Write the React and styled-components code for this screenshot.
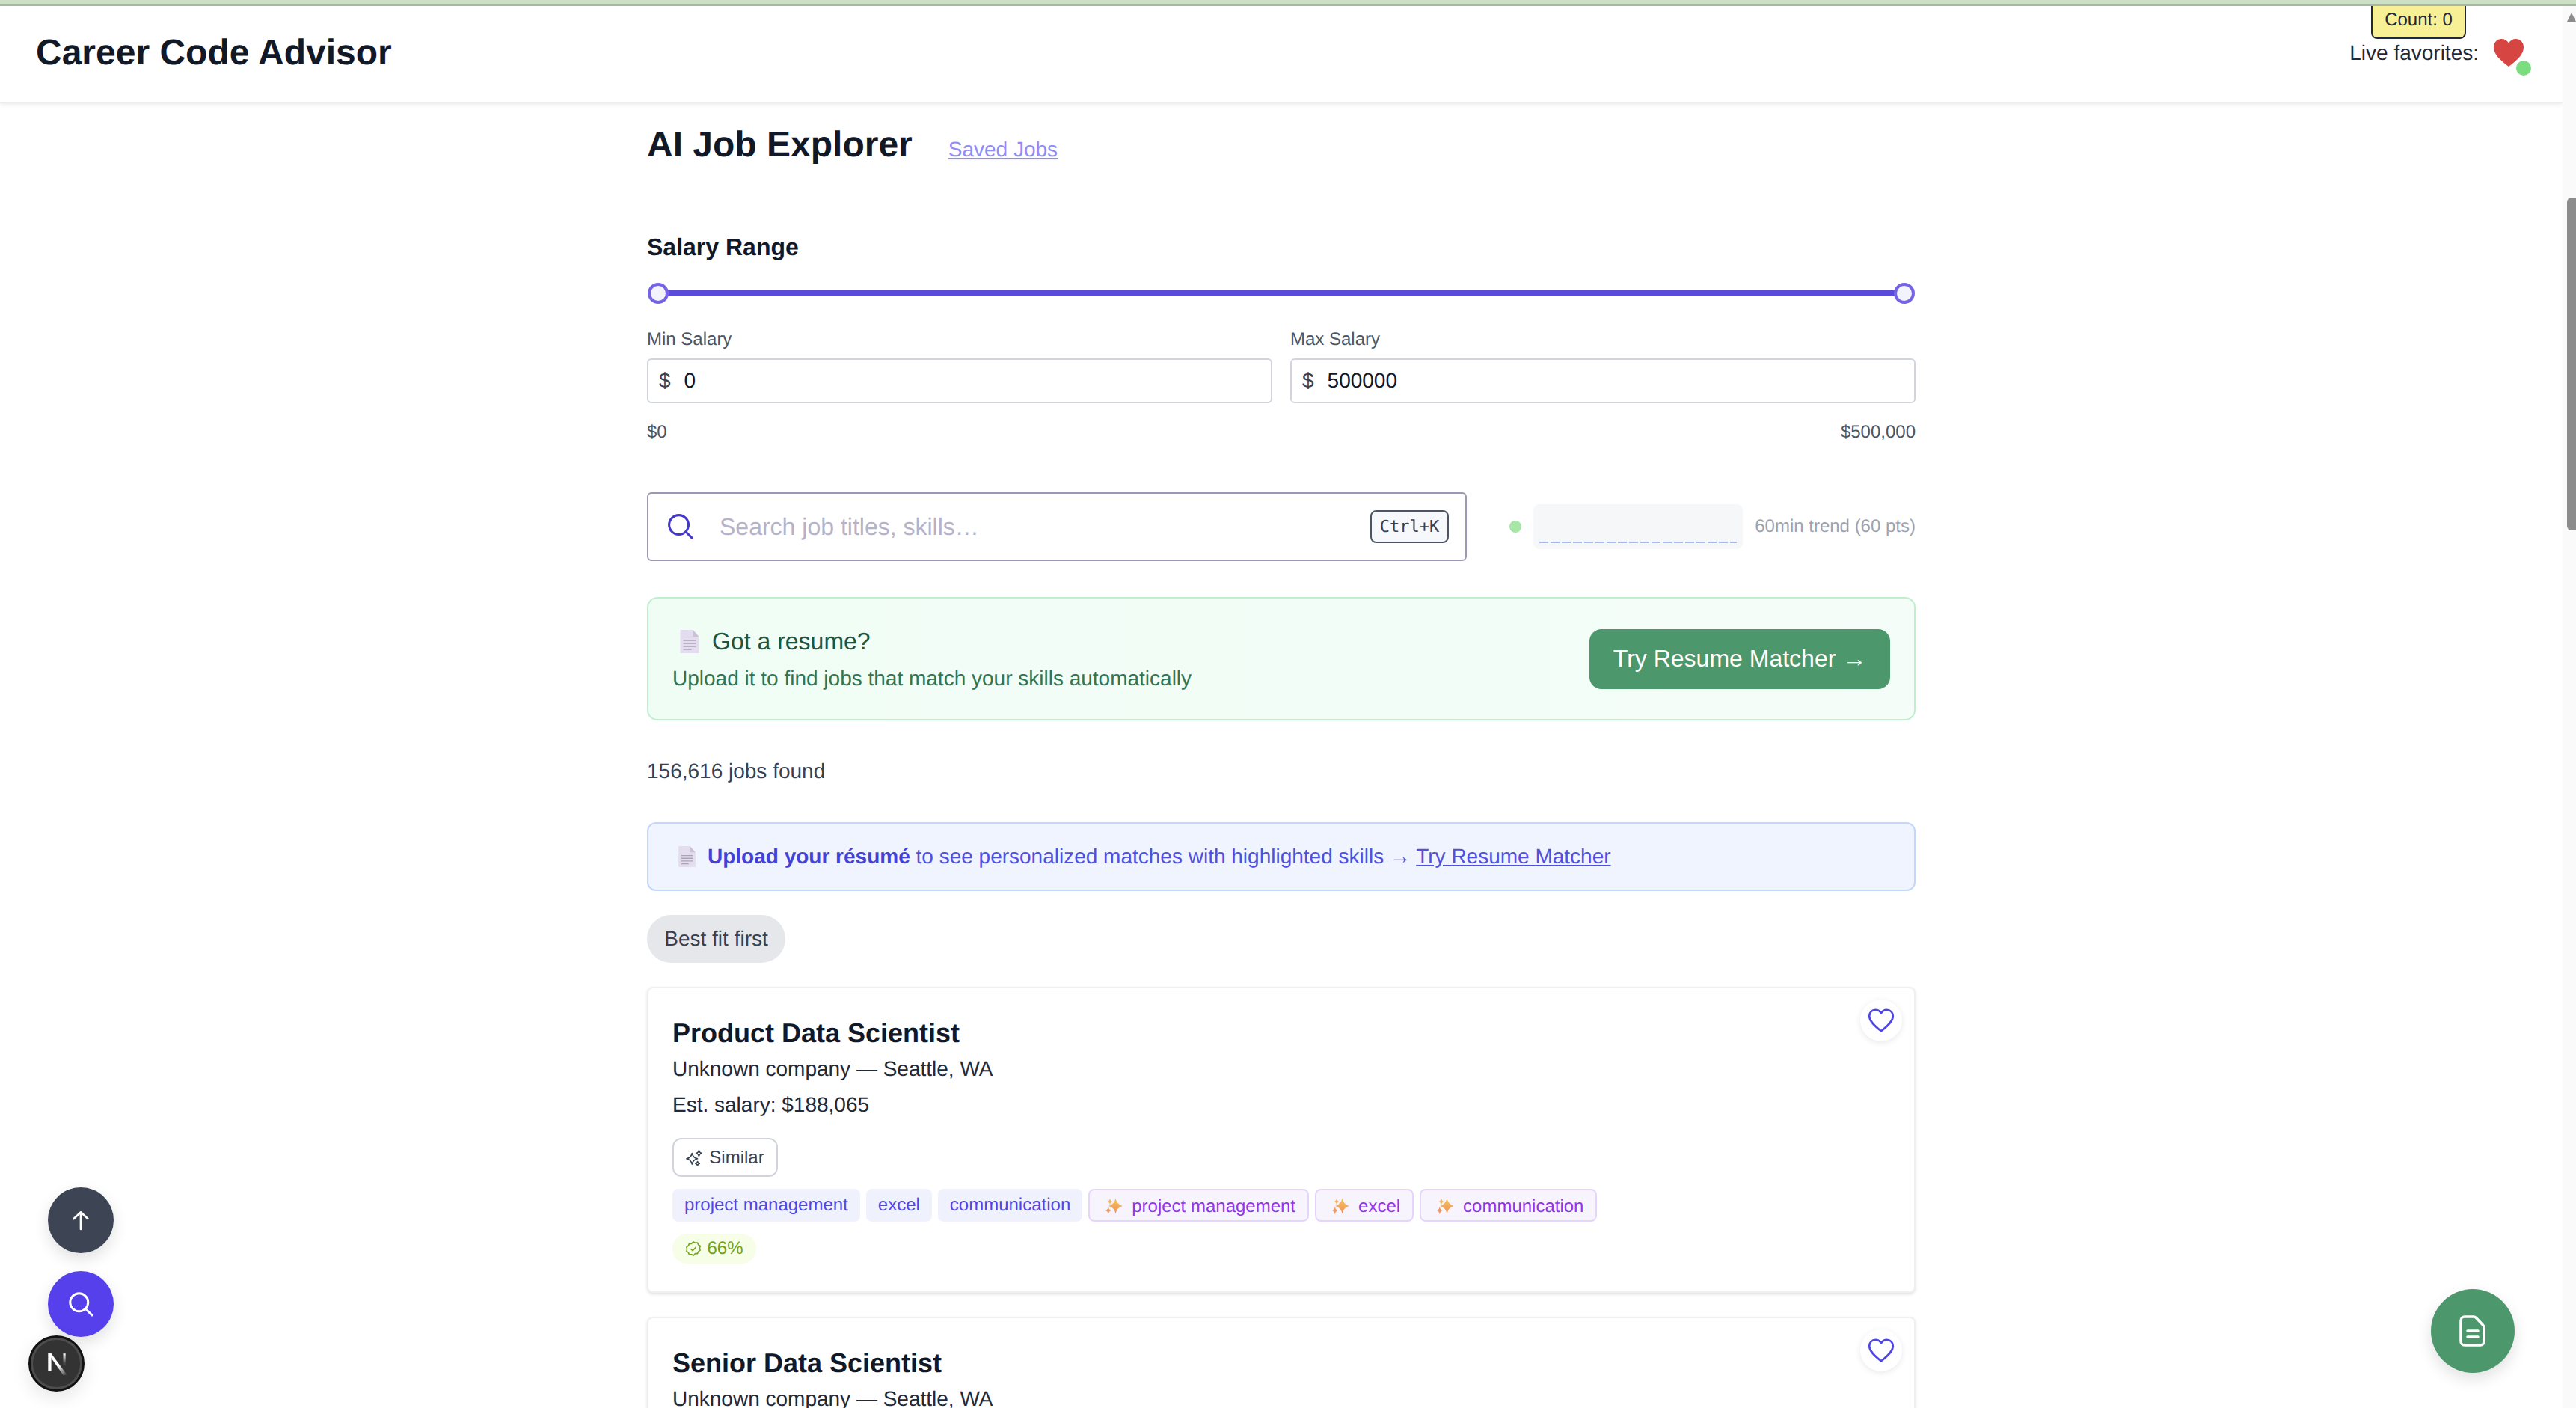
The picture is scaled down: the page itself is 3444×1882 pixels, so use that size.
import React from "react";
import styled, { createGlobalStyle } from "styled-components";

const GlobalStyle = createGlobalStyle`
  html, body {
    margin: 0;
    height: 100%;
    overflow: hidden;
    background: #fff;
    font-family: "Liberation Sans", Arial, sans-serif;
    text-rendering: geometricPrecision;
  }
  * { box-sizing: border-box; }
`;

const Shell = styled.div`
  height: 100vh;
  display: flex;
  flex-direction: column;
`;

const TopBand = styled.div`
  height: 8px;
  flex: none;
  background: #cde0c6;
  border-bottom: 2px solid #a6b8a0;
`;

const Viewport = styled.div`
  flex: 1;
  min-height: 0;
  display: flex;
`;

const Page = styled.div`
  flex: 1;
  min-width: 0;
  overflow: hidden;
`;

const Scrollbar = styled.div`
  width: 18px;
  flex: none;
  background: #fafafa;
  padding: 9px 0 0 6px;
`;

const ScrollArrow = styled.div`
  width: 0;
  height: 0;
  border-left: 6px solid transparent;
  border-right: 6px solid transparent;
  border-bottom: 12px solid #8c8c8c;
`;

const ScrollThumb = styled.div`
  width: 12px;
  height: 445px;
  margin-top: 235px;
  background: #8c8c8c;
  border-radius: 6px 0 0 6px;
`;

const Header = styled.header`
  height: 130px;
  padding: 0 40px 3px 48px;
  display: flex;
  align-items: center;
  justify-content: space-between;
  position: relative;
  background: #fff;
  border-bottom: 2px solid #ececec;
  box-shadow: 0 2px 6px rgba(0, 0, 0, 0.08);
`;

const Brand = styled.h1`
  margin: 0;
  font-size: 48px;
  font-weight: 700;
  color: #111827;
`;

const LiveFavorites = styled.div`
  display: flex;
  align-items: center;
  gap: 20px;
  font-size: 28px;
  color: #1f2937;
`;

const CountTip = styled.div`
  position: absolute;
  top: 0;
  left: 3170px;
  width: 127px;
  height: 44px;
  padding-bottom: 5px;
  display: flex;
  align-items: center;
  justify-content: center;
  font-size: 24px;
  color: #1f2937;
  background: #f8f094;
  border: 2px solid #1f2937;
  border-top: none;
  border-radius: 0 0 8px 8px;
`;

const HeartWrap = styled.div`
  position: relative;
  width: 40px;
  height: 38px;
  margin-right: 12px;
  display: flex;
`;

const LiveDot = styled.span`
  position: absolute;
  right: -10px;
  bottom: -11px;
  width: 20px;
  height: 20px;
  border-radius: 50%;
  background: #7bdc80;
`;

const Main = styled.main`
  width: 1696px;
  margin: 0 auto;
`;

const TitleRow = styled.div`
  display: flex;
  align-items: baseline;
  gap: 48px;
  margin-top: 27px;
`;

const PageTitle = styled.h2`
  margin: 0;
  font-size: 48px;
  line-height: 58px;
  font-weight: 700;
  color: #111827;
`;

const SavedLink = styled.a`
  font-size: 28px;
  color: #8f8cf7;
  text-decoration: underline;
`;

const SectionLabel = styled.div`
  margin-top: 87px;
  font-size: 32px;
  line-height: 40px;
  font-weight: 700;
  color: #111827;
`;

const Slider = styled.div`
  margin-top: 28px;
  height: 28px;
  display: flex;
  align-items: center;
  position: relative;
  padding: 0 4px;
`;

const SliderTrack = styled.div`
  flex: 1;
  height: 8px;
  background: #5a4bdb;
`;

const SliderThumb = styled.span`
  position: absolute;
  top: 0;
  ${(p) => (p.$end ? "right: 1px;" : "left: 1px;")}
  width: 28px;
  height: 28px;
  border-radius: 50%;
  border: 4px solid #7565e6;
  background: #f3f3fb;
`;

const SalaryGrid = styled.div`
  margin-top: 33px;
  display: grid;
  grid-template-columns: 1fr 1fr;
  column-gap: 24px;
`;

const FieldLabel = styled.div`
  font-size: 24px;
  line-height: 30px;
  color: #4b5563;
`;

const MoneyField = styled.div`
  margin-top: 10px;
  height: 60px;
  padding: 0 14px;
  display: flex;
  align-items: center;
  gap: 18px;
  border: 2px solid #d1d5db;
  border-radius: 6px;
  font-size: 28px;
  color: #111827;
`;

const Currency = styled.span`
  color: #374151;
`;

const RangeEnds = styled.div`
  margin-top: 25px;
  display: flex;
  justify-content: space-between;
  font-size: 24px;
  line-height: 28px;
  color: #4b5563;
`;

const SearchRow = styled.div`
  margin-top: 66px;
  display: flex;
  align-items: center;
`;

const SearchBox = styled.div`
  width: 1096px;
  height: 92px;
  padding: 0 22px 0 26px;
  display: flex;
  align-items: center;
  border: 2px solid #9d97b5;
  border-radius: 6px;
`;

const SearchText = styled.span`
  flex: 1;
  margin-left: 35px;
  font-size: 32px;
  color: #b5b2c9;
`;

const Kbd = styled.kbd`
  width: 105px;
  height: 44px;
  display: flex;
  align-items: center;
  justify-content: center;
  font-family: "DejaVu Sans Mono", monospace;
  font-size: 22px;
  color: #374151;
  background: #f7f8fb;
  border: 2px solid #4b5563;
  border-radius: 8px;
`;

const StatusDot = styled.span`
  margin-left: 57px;
  width: 16px;
  height: 16px;
  border-radius: 50%;
  background: #a6e6a6;
`;

const Spark = styled.div`
  margin-left: 16px;
  width: 280px;
  height: 60px;
  padding: 0 8px 8px;
  display: flex;
  align-items: flex-end;
  background: #f6f7f9;
  border-radius: 8px;
`;

const TrendLabel = styled.span`
  margin-left: auto;
  font-size: 24px;
  color: #9ca3af;
`;

const ResumeBanner = styled.section`
  margin-top: 48px;
  height: 165px;
  padding: 0 32px;
  display: flex;
  align-items: center;
  justify-content: space-between;
  border: 2px solid #c0efd0;
  border-radius: 14px;
  background: linear-gradient(90deg, #f0fdf5, #f5fdf9);
`;

const BannerTitle = styled.div`
  display: flex;
  align-items: center;
  gap: 17px;
  padding-left: 10px;
  font-size: 32px;
  color: #22543d;
`;

const BannerText = styled.div`
  margin-top: 15px;
  font-size: 28px;
  color: #2f7553;
`;

const MatcherButton = styled.button`
  width: 402px;
  height: 80px;
  border: none;
  border-radius: 16px;
  background: #4d976c;
  color: #fff;
  font-family: inherit;
  font-size: 32px;
`;

const FoundCount = styled.div`
  margin-top: 52px;
  font-size: 28px;
  line-height: 32px;
  color: #374151;
`;

const UploadNote = styled.div`
  margin-top: 52px;
  height: 92px;
  padding: 0 40px;
  display: flex;
  align-items: center;
  gap: 16px;
  border: 2px solid #c3d6fb;
  border-radius: 12px;
  background: #f0f4fe;
  font-size: 28px;
  color: #4f4fe0;

  b {
    color: #4341d8;
  }

  a {
    color: inherit;
    text-decoration: underline;
  }
`;

const SortPill = styled.div`
  margin-top: 32px;
  width: 185px;
  height: 64px;
  display: flex;
  align-items: center;
  justify-content: center;
  border-radius: 32px;
  background: #e5e7eb;
  font-size: 28px;
  color: #374151;
`;

const JobCard = styled.article`
  margin-top: ${(p) => p.$gap}px;
  height: 409px;
  padding: 38px 32px 0;
  position: relative;
  background: #fff;
  border: 2px solid #f0f0f0;
  border-radius: 8px;
  box-shadow: 0 2px 4px rgba(0, 0, 0, 0.12);
`;

const JobTitle = styled.h3`
  margin: 0;
  font-size: 36px;
  line-height: 44px;
  font-weight: 700;
  color: #111827;
`;

const JobLine = styled.div`
  margin-top: ${(p) => p.$gap}px;
  font-size: 28px;
  line-height: 36px;
  color: #1f2937;
`;

const SimilarButton = styled.button`
  margin-top: 26px;
  width: 141px;
  height: 52px;
  padding: 0;
  display: flex;
  align-items: center;
  justify-content: center;
  gap: 9px;
  border: 2px solid #d1d5db;
  border-radius: 12px;
  background: #fff;
  font-family: inherit;
  font-size: 24px;
  color: #374151;
`;

const ChipRow = styled.div`
  margin-top: 16px;
  display: flex;
  gap: 8px;
`;

const Chip = styled.span`
  height: 44px;
  padding: 0 16px;
  display: flex;
  align-items: center;
  border-radius: 8px;
  background: #eff1fd;
  font-size: 24px;
  color: #4f46e5;
`;

const SparkleChip = styled(Chip)`
  padding: 3px 16px 0 21px;
  gap: 12px;
  background: #f8f4fe;
  border: 2px solid #e5d4fc;
  color: #9333ea;
`;

const MatchBadge = styled.div`
  margin-top: 16px;
  width: 112px;
  height: 40px;
  display: flex;
  align-items: center;
  justify-content: center;
  gap: 7px;
  border-radius: 20px;
  background: #f7fee7;
  font-size: 24px;
  color: #6ea31a;
`;

const FavButton = styled.button`
  position: absolute;
  top: 15px;
  right: 16px;
  width: 56px;
  height: 56px;
  display: flex;
  align-items: center;
  justify-content: center;
  padding: 0;
  border: none;
  border-radius: 50%;
  background: #fff;
  box-shadow: 0 2px 8px rgba(0, 0, 0, 0.09);
`;

const Fab = styled.button`
  position: fixed;
  left: ${(p) => p.$left}px;
  top: ${(p) => p.$top}px;
  width: ${(p) => p.$size}px;
  height: ${(p) => p.$size}px;
  display: flex;
  align-items: center;
  justify-content: center;
  padding: 0;
  border: none;
  border-radius: 50%;
  background: ${(p) => p.$bg};
  box-shadow: 0 8px 20px rgba(0, 0, 0, 0.12);
`;

const NextBadge = styled(Fab)`
  border: 3px solid #111;
  box-shadow: inset 0 0 0 3px #4d4d4d, 0 8px 24px rgba(0, 0, 0, 0.1);
`;

// four point star, used by both sparkle icons
const star = (cx, cy, rx, ry = rx) => {
  const kx = rx * 0.18;
  const ky = ry * 0.18;
  return `M${cx} ${cy - ry}Q${cx + kx} ${cy - ky} ${cx + rx} ${cy}Q${cx + kx} ${cy + ky} ${cx} ${cy + ry}Q${cx - kx} ${cy + ky} ${cx - rx} ${cy}Q${cx - kx} ${cy - ky} ${cx} ${cy - ry}z`;
};

const DocEmoji = ({ w, h }) => (
  <svg width={w} height={h} viewBox="0 0 25 31">
    <path d="M0 0h17l8 9v22H0z" fill="#e4dcef" />
    <path d="M17 0l8 9h-8z" fill="#c9c3d4" />
    <path d="M4 14h17M4 18h17M4 22h17M4 26h11" stroke="#a9a3b5" strokeWidth="1.6" />
  </svg>
);

const SearchIcon = ({ size, color, width, box = "0 0 24 24" }) => (
  <svg width={size} height={size} viewBox={box} fill="none" stroke={color} strokeWidth={width} strokeLinecap="round">
    <circle cx="10.5" cy="10.5" r="8" />
    <path d="M16.5 16.5L22 22" />
  </svg>
);

const HeartOutline = () => (
  <svg width="38" height="38" viewBox="0 0 24 24" fill="none" stroke="#4f46e5" strokeWidth="1.7" strokeLinejoin="round">
    <path d="M12 21C5 15.5 2 12 2 8.2 2 5.2 4.3 3 7.2 3c2 0 3.7 1 4.8 2.8C13.100 4 14.800 3 16.800 3 19.700 3 22 5.200 22 8.200c0 3.800-3 7.300-10 12.800z" />
  </svg>
);

const Sparkles = () => (
  <svg width="22" height="22" viewBox="0 0 24 24" fill="none" stroke="#374151" strokeWidth="1.7" strokeLinejoin="round">
    <path d={star(9, 14, 8)} />
    <path d={star(19, 6, 4.2)} />
    <path d={star(17, 21, 3)} />
  </svg>
);

const AmberSparkle = ({ id }) => (
  <svg width="23" height="23" viewBox="0 0 23 23">
    <defs>
      <linearGradient id={id} x1="0" y1="0" x2="0" y2="1">
        <stop offset="0" stopColor="#f8c552" />
        <stop offset="1" stopColor="#ee8f5f" />
      </linearGradient>
    </defs>
    <path d={star(13.500, 11, 9.500, 10.500)} fill={`url(#${id})`} />
    <path d={star(6, 5, 3.500, 4.500)} fill="#f4b860" />
    <path d={star(3.800, 17, 3.800, 5.500)} fill="#ef9a62" />
  </svg>
);

const BadgeCheck = () => (
  <svg width="22" height="22" viewBox="0 0 24 24" fill="none" stroke="#6ea31a" strokeWidth="1.700" strokeLinecap="round" strokeLinejoin="round">
    <path d="M12 2l2.800 1.600 3.200-.2 1.300 3 2.700 1.800-.8 3.100.8 3.100-2.700 1.800-1.300 3-3.200-.2L12 22l-2.800-1.600-3.200.2-1.300-3-2.700-1.800.8-3.100-.8-3.100 2.700-1.800 1.300-3 3.200.2z" />
    <path d="M8.500 12.500l2.500 2.500 4.500-5" />
  </svg>
);

const skills = ["project management", "excel", "communication"];

function Job({ title, salary, gap }) {
  return (
    <JobCard $gap={gap}>
      <FavButton>
        <HeartOutline />
      </FavButton>
      <JobTitle>{title}</JobTitle>
      <JobLine $gap={8}>Unknown company — Seattle, WA</JobLine>
      <JobLine $gap={12}>Est. salary: {salary}</JobLine>
      <SimilarButton>
        <Sparkles />
        Similar
      </SimilarButton>
      <ChipRow>
        {skills.map((s) => (
          <Chip key={s}>{s}</Chip>
        ))}
        {skills.map((s) => (
          <SparkleChip key={s}>
            <AmberSparkle id={`${title}-${s}`.replace(/\W/g, "")} />
            {s}
          </SparkleChip>
        ))}
      </ChipRow>
      <MatchBadge>
        <BadgeCheck />
        66%
      </MatchBadge>
    </JobCard>
  );
}

function App() {
  return (
    <Shell>
      <GlobalStyle />
      <TopBand />
      <Viewport>
        <Page>
          <Header>
            <Brand>Career Code Advisor</Brand>
            <LiveFavorites>
              Live favorites:
              <HeartWrap>
                <svg width="40" height="38" viewBox="0 0 40 38">
                  <path d="M20 37C7 27 0 20 0 11 0 4.500 4.800 0 10.500 0 14.500 0 18 2 20 5.500 22 2 25.500 0 29.500 0 35.200 0 40 4.500 40 11c0 9-7 16-20 26z" fill="#d64541" />
                </svg>
                <LiveDot />
              </HeartWrap>
            </LiveFavorites>
            <CountTip>Count: 0</CountTip>
          </Header>
          <Main>
            <TitleRow>
              <PageTitle>AI Job Explorer</PageTitle>
              <SavedLink>Saved Jobs</SavedLink>
            </TitleRow>
            <SectionLabel>Salary Range</SectionLabel>
            <Slider>
              <SliderTrack />
              <SliderThumb />
              <SliderThumb $end />
            </Slider>
            <SalaryGrid>
              <div>
                <FieldLabel>Min Salary</FieldLabel>
                <MoneyField>
                  <Currency>$</Currency>0
                </MoneyField>
              </div>
              <div>
                <FieldLabel>Max Salary</FieldLabel>
                <MoneyField>
                  <Currency>$</Currency>500000
                </MoneyField>
              </div>
            </SalaryGrid>
            <RangeEnds>
              <span>$0</span>
              <span>$500,000</span>
            </RangeEnds>
            <SearchRow>
              <SearchBox>
                <SearchIcon size={34} color="#4338ca" width={1.9} box="1.500 1.500 21 21" />
                <SearchText>Search job titles, skills…</SearchText>
                <Kbd>Ctrl+K</Kbd>
              </SearchBox>
              <StatusDot />
              <Spark>
                <svg width="264" height="2">
                  <line x1="0" y1="1" x2="264" y2="1" stroke="#a9b9f6" strokeWidth="2" strokeDasharray="12 3" />
                </svg>
              </Spark>
              <TrendLabel>60min trend (60 pts)</TrendLabel>
            </SearchRow>
            <ResumeBanner>
              <div>
                <BannerTitle>
                  <DocEmoji w={26} h={31} />
                  Got a resume?
                </BannerTitle>
                <BannerText>Upload it to find jobs that match your skills automatically</BannerText>
              </div>
              <MatcherButton>Try Resume Matcher →</MatcherButton>
            </ResumeBanner>
            <FoundCount>156,616 jobs found</FoundCount>
            <UploadNote>
              <DocEmoji w={23} h={28} />
              <span>
                <b>Upload your résumé</b> to see personalized matches with highlighted skills → <a>Try Resume Matcher</a>
              </span>
            </UploadNote>
            <SortPill>Best fit first</SortPill>
            <Job title="Product Data Scientist" salary="$188,065" gap={32} />
            <Job title="Senior Data Scientist" salary="$188,065" gap={32} />
          </Main>
        </Page>
        <Scrollbar>
          <ScrollArrow />
          <ScrollThumb />
        </Scrollbar>
      </Viewport>
      <Fab $left={64} $top={1587} $size={88} $bg="#3d4454">
        <svg width="32" height="32" viewBox="0 0 24 24" fill="none" stroke="#fff" strokeWidth="2" strokeLinecap="round" strokeLinejoin="round">
          <path d="M12 21V4M5 10.500L12 4l7 6.500" />
        </svg>
      </Fab>
      <Fab $left={64} $top={1699} $size={88} $bg="#5540ec">
        <SearchIcon size={36} color="#fff" width={2} />
      </Fab>
      <NextBadge $left={38} $top={1785} $size={75} $bg="#333">
        <svg width="34" height="34" viewBox="0 0 32 32">
          <defs>
            <linearGradient id="nFade" x1="0" y1="0" x2="0" y2="1">
              <stop offset="0" stopColor="#fff" />
              <stop offset="0.8" stopColor="#fff" stopOpacity="0.1" />
            </linearGradient>
            <linearGradient id="nSlash" x1="0" y1="0" x2="1" y2="1">
              <stop offset="0.55" stopColor="#fff" />
              <stop offset="1" stopColor="#fff" stopOpacity="0" />
            </linearGradient>
          </defs>
          <path d="M5 3h4v22H5z" fill="#fff" />
          <path d="M5 3h4l20 27h-5z" fill="url(#nSlash)" />
          <path d="M24 3h3v15h-3z" fill="url(#nFade)" />
        </svg>
      </NextBadge>
      <Fab $left={3250} $top={1723} $size={112} $bg="#4d976c">
        <svg width="36" height="44" viewBox="0 0 36 44" fill="none" stroke="#fff" strokeWidth="3.500" strokeLinecap="round" strokeLinejoin="round">
          <path d="M7 3h12c1.500 0 2.500.5 3.500 1.500l9 9.500c1 1 1.500 2 1.500 3.500V36c0 2.700-2 5-5 5H7c-2.700 0-5-2.300-5-5V8c0-2.700 2.300-5 5-5z" />
          <path d="M11 22h14M11 30h14" />
        </svg>
      </Fab>
    </Shell>
  );
}

export default App;
